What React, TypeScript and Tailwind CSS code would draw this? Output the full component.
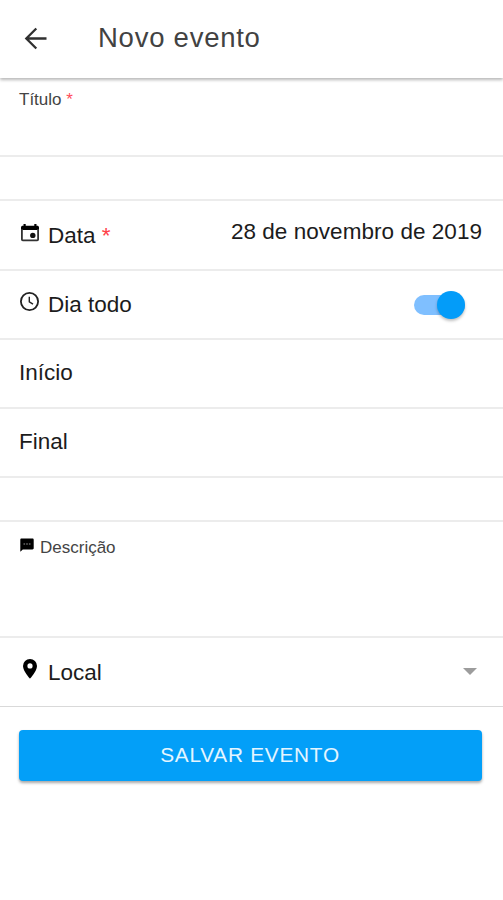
import type { ReactNode } from "react";

function BackArrow() {
  return (
    <svg viewBox="0 0 24 24" className="h-6 w-6" fill="none" stroke="#303030" strokeWidth="2.3">
      <path d="M22.500 11.500H3M12.300 1.500L2.300 11.500l10 10" />
    </svg>
  );
}

function CalendarIcon() {
  return (
    <svg viewBox="0 0 18 18" className="h-[18px] w-[18px]">
      <path
        fill="#000"
        d="M2.500 0h2.200v1.700h8.600V0h2.200v1.700h.8c.9 0 1.700.7 1.700 1.700V6H0V3.400c0-1 .8-1.700 1.700-1.700h.8z"
      />
      <path fill="none" stroke="#333" strokeWidth="1.800" d="M.9 5v10.400c0 .5.400.900.900.900h14.400c.5 0 .9-.4.900-.9V5" />
      <circle cx="11.800" cy="11.400" r="2.700" fill="#111" />
    </svg>
  );
}

function ClockIcon() {
  return (
    <svg viewBox="0 0 20 20" className="h-5 w-5" fill="none" stroke="#222">
      <circle cx="9.500" cy="9.500" r="8.600" strokeWidth="1.800" />
      <path d="M9.300 4.800v5l3.700 2.400" strokeWidth="1.400" />
    </svg>
  );
}

function MessageIcon() {
  return (
    <svg viewBox="0 0 14 14" className="h-3.5 w-3.5">
      <path fill="#000" d="M1.500.5h11c.7 0 1.200.500 1.200 1.200v8.600c0 .7-.5 1.200-1.200 1.200H2.800L.3 13.800V1.700C.3 1 .8.500 1.500.500z" />
      <path fill="#666" d="M3.500 5.300h1.600v1.400H3.500zM6.200 5.300h1.600v1.400H6.200zM8.900 5.300h1.600v1.400H8.900z" />
    </svg>
  );
}

function PinIcon() {
  return (
    <svg viewBox="0 0 14 20" className="h-5 w-3.5">
      <path
        fill="#000"
        fillRule="evenodd"
        d="M7 0a7 7 0 0 0-7 7c0 5.200 7 12.700 7 12.700S14 12.200 14 7a7 7 0 0 0-7-7zm0 9.500a2.600 2.600 0 1 1 0-5.200 2.600 2.600 0 0 1 0 5.200z"
      />
    </svg>
  );
}

function Row({ className, children }: { className: string; children?: ReactNode }) {
  return <div className={`flex shrink-0 border-b-2 border-[#ececec] px-[19px] ${className}`}>{children}</div>;
}

export default function App() {
  return (
    <main className="flex h-[900px] w-full flex-col overflow-hidden bg-white font-['Liberation_Sans',Arial,sans-serif] text-[22.5px] leading-[26px] text-[#1c1c1c]">
      <header className="relative flex h-[78px] shrink-0 items-center pl-6 shadow-[0_2px_3px_rgba(0,0,0,0.28)]">
        <button aria-label="Voltar" className="-mt-px">
          <BackArrow />
        </button>
        <h1 className="-mt-0.5 ml-[50px] text-[27.5px] leading-8 tracking-[0.75px] text-[#424242]">Novo evento</h1>
      </header>

      <Row className="h-[79px] pt-3 text-[17px] leading-5 text-[#444]">
        <label>
          Título <span className="text-[#ff4c5b]">*</span>
        </label>
      </Row>
      <Row className="h-11" />
      <Row className="h-[70px] justify-between pt-[18px]">
        <div className="flex gap-[9px]">
          <span className="mt-[5px] ml-[2px]">
            <CalendarIcon />
          </span>
          <label className="mt-1">
            Data <span className="text-[#ff4048]">*</span>
          </label>
        </div>
        <span className="mr-0.5 tracking-[0.04px]">28 de novembro de 2019</span>
      </Row>
      <Row className="h-[69px] justify-between pt-5">
        <div className="flex gap-2">
          <span className="mt-px ml-px">
            <ClockIcon />
          </span>
          <label className="mt-px">Dia todo</label>
        </div>
        <button role="switch" aria-checked="true" aria-label="Dia todo" className="mt-1 mr-[19px] flex h-5 w-[51px] items-center justify-end rounded-full bg-[#7fbfff]">
          <span className="h-7 w-7 shrink-0 rounded-full bg-[#039cf9] shadow-[0_2px_3px_rgba(0,0,0,0.25)]" />
        </button>
      </Row>
      <Row className="h-[69px] pt-5">Início</Row>
      <Row className="h-[69px] pt-5">Final</Row>
      <Row className="h-11" />
      <Row className="h-[116px] gap-[6px] pt-4 text-[17px] leading-5 text-[#444]">
        <span className="ml-px">
          <MessageIcon />
        </span>
        <label>Descrição</label>
      </Row>
      <div className="flex h-[69px] shrink-0 justify-between border-b border-[#d9d9d9] pr-[26px] pl-[23px] pt-[21px]">
        <div className="flex gap-[11px]">
          <PinIcon />
          <label className="mt-[1px]">Local</label>
        </div>
        <svg viewBox="0 0 14 7" className="mt-[9px] h-[7px] w-3.5">
          <path d="M0 0h14L7 7z" fill="#9c9c9c" />
        </svg>
      </div>
      <button className="mr-[21px] ml-[19px] mt-[23px] flex h-[51px] shrink-0 items-center justify-center rounded-[4px] bg-[#039ff8] pr-px pb-0.5 text-[20.8px] tracking-[0.75px] text-[#e4f5ff] shadow-[0_2px_3px_rgba(0,0,0,0.35)]">
        SALVAR EVENTO
      </button>
    </main>
  );
}
